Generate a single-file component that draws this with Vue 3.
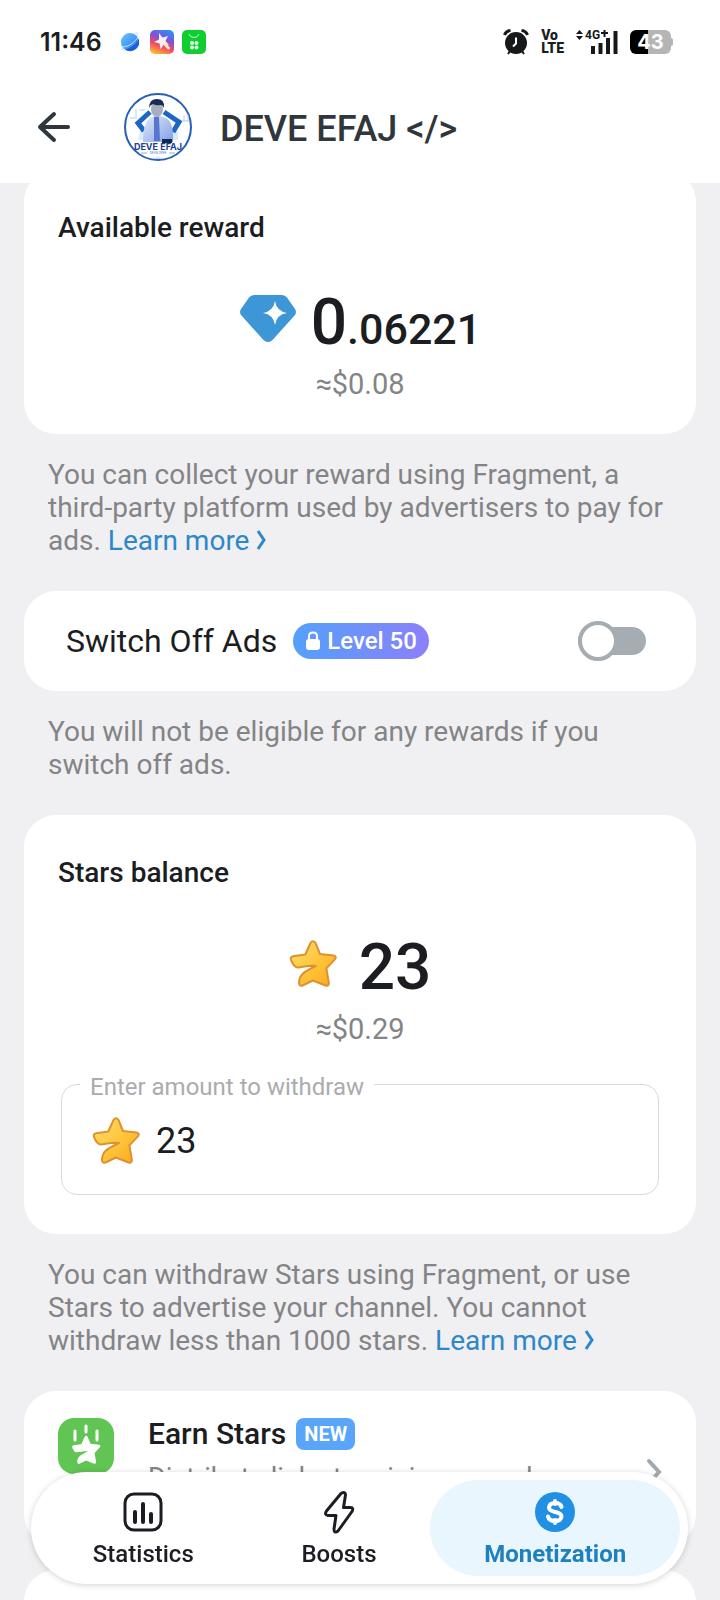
<script setup>
import { ref } from "vue";

const adsOff = ref(false);
const amount = ref("23");
const activeTab = ref("monetization");

const tabs = [
	{ id: "statistics", label: "Statistics" },
	{ id: "boosts", label: "Boosts" },
	{ id: "monetization", label: "Monetization" }
];

const starPath = "M21.500 3q2.500-3.600 5 0l4.500 11 13.500 1.500q3.600.9 1.400 3.900l-8.500 9 2.400 14.200q.3 4-3.200 2.900L24 40.500l-10.500 5q-3.700 1-3.500-2.800c.2-3.400.8-6.300 3.500-8.800 3.200-3 8-5.200 13.500-8-6-.8-12 .8-17.500 1.500-3 .2-4-1-5.400-3.200l-2-4q-1.200-3.400 2-4l12.200-1.700z";
</script>

<template>
	<div class="page">
		<svg class="defs" width="0" height="0" aria-hidden="true">
			<defs>
				<linearGradient id="gold" x1="0" y1="0" x2="1" y2="1">
					<stop offset="0" stop-color="#ffe06a" />
					<stop offset="0.6" stop-color="#fdc136" />
					<stop offset="1" stop-color="#fba71f" />
				</linearGradient>
				<linearGradient id="rainbow" x1="0.7" y1="0" x2="0.3" y2="1">
					<stop offset="0" stop-color="#2f8cf5" />
					<stop offset="0.35" stop-color="#7a55d8" />
					<stop offset="0.65" stop-color="#f0476b" />
					<stop offset="1" stop-color="#ffb52e" />
				</linearGradient>
				<linearGradient id="orb" x1="0" y1="0" x2="1" y2="1">
					<stop offset="0" stop-color="#6cc4ff" />
					<stop offset="1" stop-color="#2573e8" />
				</linearGradient>
				<linearGradient id="shirt" x1="0" y1="0" x2="1" y2="1">
					<stop offset="0" stop-color="#e6ecfb" />
					<stop offset="1" stop-color="#7f9fe4" />
				</linearGradient>
			</defs>
		</svg>

		<header class="header">
			<div class="status">
				<span class="clock">11:46</span>
				<div class="apps">
					<svg width="24" height="24" viewBox="0 0 24 24">
						<path d="M3 20Q2 2 13 3l7-1q1 5 0 10-1 9-11 9z" fill="#dceeff" />
						<circle cx="12" cy="12" r="9" fill="url(#orb)" />
						<path d="M7 19.500C14 18 19 13 20.500 9q2 6-2.500 10-5 4-11 .5z" fill="#1d5edb" />
						<path d="M4 17C11 17 17 12 20 7" fill="none" stroke="#b9e2ff" stroke-width="1" />
					</svg>
					<svg width="24" height="24" viewBox="0 0 24 24">
						<rect width="24" height="24" rx="5" fill="url(#rainbow)" />
						<path d="M9 3l3.500 4.500L18 6l-2.500 5 3.500 4-5-.5-3.500 4.500-1-5.500L4 12l5-2.500z" fill="#fff" opacity="0.9" />
						<path d="M15.500 15l3 3" stroke="#ffe9b0" stroke-width="3" stroke-linecap="round" />
					</svg>
					<svg width="24" height="24" viewBox="0 0 24 24">
						<rect width="24" height="24" rx="5" fill="#0fce32" />
						<path d="M7 4q1 3.500 5 3.500T17 4" fill="none" stroke="#b6ffc0" stroke-width="1" />
						<g fill="#e3ffe7">
							<circle cx="10" cy="13" r="2" />
							<circle cx="14.500" cy="13" r="2" />
							<circle cx="10" cy="17.500" r="2" />
							<circle cx="14.500" cy="17.500" r="2" />
						</g>
					</svg>
				</div>
				<div class="signals">
					<svg width="26" height="26" viewBox="0 0 26 26">
						<circle cx="13" cy="14" r="11" fill="#161819" />
						<path d="M1.500 6q1.500-4 6-4.500M24.500 6q-1.500-4-6-4.500" fill="none" stroke="#161819" stroke-width="3" />
						<path d="M7 22l-2 3M19 22l2 3" stroke="#161819" stroke-width="2" />
						<path d="M13 8.500v6l-3 3" fill="none" stroke="#fff" stroke-width="2" />
					</svg>
					<span class="volte"><span>Vo</span><span>LTE</span></span>
					<svg class="network" width="42" height="26" viewBox="0 0 42 26">
						<path d="M0 5h7L3.500 1zM0 7h7l-3.500 4z" fill="#161819" />
						<text x="9" y="10" class="net">4G</text>
						<path d="M25 4h7M28.500 1v7" stroke="#161819" stroke-width="2" />
						<path d="M17 17v8M24.500 14v11M32 9v16M39.500 2v23" stroke="#161819" stroke-width="4" />
					</svg>
					<span class="battery"><span class="level">43</span></span>
				</div>
			</div>
			<div class="bar">
				<button class="back" type="button" aria-label="Back">
					<svg width="36" height="32" viewBox="0 0 36 32">
						<path d="M32 16H4M18 3L4 16l14 13" fill="none" stroke="#30373c" stroke-width="4" stroke-linecap="round" stroke-linejoin="round" />
					</svg>
				</button>
				<svg class="avatar" width="68" height="68" viewBox="0 0 68 68">
					<circle cx="34" cy="34" r="33" fill="#fff" stroke="#2760b4" stroke-width="2" />
					<path d="M16 38q4-5 8-4h22q7 2 8 5v8H14z" fill="#d9ebfb" />
					<path d="M26 19l-12 11 6 8M40 19l15 10-6 10" fill="none" stroke="#1e66c4" stroke-width="5" />
					<path d="M19 49q0-19 7-24l7-3 9 3q8 4 7 24z" fill="url(#shirt)" />
					<path d="M30 24h5l1 24h-6z" fill="#5676cf" />
					<path d="M38 46h10v4H38z" fill="#16254e" />
					<ellipse cx="33" cy="16" rx="6" ry="8" fill="#a6aec0" />
					<path d="M25 15q0-9 8-9t7 9q-1-3-3-3-5 1-8-1-3 1-4 4z" fill="#192d52" />
					<path d="M12 16v8M6 25h7M60 22v6M64 22v6M58 28h7M15 17h6" fill="none" stroke="#b5cfe8" stroke-width="1" />
					<text x="34" y="57" class="avatar-name">DEVE EFAJ</text>
					<path d="M17 60h6M45 60h6" stroke="#8fb0dc" stroke-width="1" />
					<text x="34" y="61" class="avatar-sub">DEVELOPER</text>
					<text x="34" y="66" class="avatar-sub">&lt;/&gt;</text>
				</svg>
				<h1 class="title">DEVE EFAJ &lt;/&gt;</h1>
			</div>
		</header>

		<main class="content">
			<section class="card">
				<h2 class="card-title">Available reward</h2>
				<div class="amount gem">
					<svg width="58" height="50" viewBox="0 0 58 50">
						<path d="M15 1h28q3 0 5 2.500L56 15q2 3 0 6L34 45.500q-5 5-10 0L2 21q-2-3 0-6l8-11.500Q12 1 15 1z" fill="#3d96d5" />
						<path d="M36 7q1.500 10 12 12-10.500 1.500-12 12-1.500-10.500-12-12 10.500-2 12-12z" fill="#fff" />
					</svg>
					<span class="sum">0<span class="fraction">.06221</span></span>
				</div>
				<p class="approx">≈$0.08</p>
			</section>
			<p class="note">
				You can collect your reward using Fragment, a third-party platform used by advertisers to pay for ads.
				<a href="#reward" class="more">Learn more<svg width="12" height="22" viewBox="0 0 12 22"><path d="M3 2l6 9-6 9" /></svg></a>
			</p>

			<section class="card switch-card">
				<label for="ads-off" class="switch-label">Switch Off Ads</label>
				<span class="level-badge">
					<svg width="16" height="20" viewBox="0 0 16 20">
						<rect x="1" y="8" width="14" height="11" rx="3" fill="#fff" />
						<path d="M4 9V5q0-3.500 4-3.500T12 5v4" fill="none" stroke="#fff" stroke-width="2" />
					</svg>
					Level 50
				</span>
				<input id="ads-off" v-model="adsOff" class="toggle" type="checkbox" />
			</section>
			<p class="note">You will not be eligible for any rewards if you switch off ads.</p>

			<section class="card">
				<h2 class="card-title">Stars balance</h2>
				<div class="amount stars">
					<svg class="star" width="48" height="48" viewBox="0 0 48 48"><path :d="starPath" /></svg>
					<span class="sum">23</span>
				</div>
				<p class="approx">≈$0.29</p>
				<fieldset class="field">
					<legend><label for="amount">Enter amount to withdraw</label></legend>
					<div class="field-row">
						<svg class="star" width="48" height="48" viewBox="0 0 48 48"><path :d="starPath" /></svg>
						<input id="amount" v-model="amount" type="text" inputmode="numeric" />
					</div>
				</fieldset>
			</section>
			<p class="note">
				You can withdraw Stars using Fragment, or use Stars to advertise your channel. You cannot withdraw less than 1000 stars.
				<a href="#stars" class="more">Learn more<svg width="12" height="22" viewBox="0 0 12 22"><path d="M3 2l6 9-6 9" /></svg></a>
			</p>

			<a href="#earn" class="card earn">
				<svg width="56" height="56" viewBox="0 0 56 56">
					<rect width="56" height="56" rx="16" fill="#61c554" />
					<path d="M17 13v9M28 8v6M39 13v9" stroke="#fff" stroke-width="3" stroke-linecap="round" />
					<path :d="starPath" class="earn-star" transform="translate(13 17) scale(0.63)" />
				</svg>
				<span class="earn-text">
					<span class="earn-title">Earn Stars <span class="new">NEW</span></span>
					<span class="earn-desc">Distribute links to mini apps and earn a share of their revenue in Stars.</span>
				</span>
				<svg class="chevron" width="16" height="28" viewBox="0 0 16 28">
					<path d="M3 3l10 11L3 25" />
				</svg>
			</a>
			<section class="card next"></section>
		</main>

		<nav class="tabs">
			<button
				v-for="tab in tabs"
				:key="tab.id"
				type="button"
				class="tab"
				:class="{ active: activeTab === tab.id }"
				@click="activeTab = tab.id"
			>
				<svg v-if="tab.id === 'statistics'" width="44" height="44" viewBox="0 0 44 44">
					<rect x="4" y="4" width="36" height="36" rx="9" />
					<path class="bars" d="M14 22v10M22 14v18M30 24v8" />
				</svg>
				<svg v-else-if="tab.id === 'boosts'" width="44" height="44" viewBox="0 0 44 44">
					<path d="M24 3.500L9.500 21q-2.500 4 1.500 4.500h8L17 39q0 5 4 2l14-19.500q2-4-1.500-4h-7L28.500 5q0-4-4.500-1.500z" />
				</svg>
				<svg v-else class="coin" width="44" height="44" viewBox="0 0 44 44">
					<circle cx="22" cy="22" r="20" />
					<path d="M28.500 17q-1-4-6.500-4t-6 4.500c0 6 12.500 3 12.500 9Q28 31 22 31t-7-4.500M22 11v3M22 30v3" />
				</svg>
				<span>{{ tab.label }}</span>
			</button>
		</nav>
	</div>
</template>

<style>
body {
	background: #f0f0f2;
}
</style>

<style scoped>
.page {
	height: 100vh;
	overflow: hidden auto;
	scrollbar-width: none;
	font-family: Roboto, "Noto Sans", sans-serif;
	color: #1b1d22;
	background: #f0f0f2;
}

.defs {
	position: absolute;
}

svg {
	display: block;
	flex: none;
}

h1,
h2,
p {
	margin: 0;
	font-weight: 500;
}

button,
input {
	font: inherit;
	color: inherit;
	padding: 0;
	border: none;
	background: none;
}

.header {
	background: #fff;
}

.status {
	display: flex;
	align-items: center;
	padding: 24px 49px 0 40px;
	height: 36px;
}

.clock {
	font-family: Inter, sans-serif;
	font-size: 25px;
	line-height: 32px;
	font-weight: 600;
}

.apps {
	display: flex;
	gap: 8px;
	margin-left: 16px;
}

.signals {
	display: flex;
	align-items: center;
	gap: 12px;
	margin-left: auto;
}

.volte {
	display: flex;
	flex-direction: column;
	font-size: 14px;
	line-height: 13px;
	font-weight: 900;
}

.network {
	overflow: visible;
}

.net {
	font: 700 12px Roboto, sans-serif;
	fill: #161819;
}

.battery {
	position: relative;
	display: flex;
	justify-content: center;
	width: 41px;
	height: 24px;
	border-radius: 6px;
	background: linear-gradient(90deg, #000 45%, #b5b5b5 45%);
}

.battery::after {
	content: "";
	position: absolute;
	top: 8px;
	right: -2px;
	width: 2px;
	height: 8px;
	border-radius: 0 2px 2px 0;
	background: #b5b5b5;
}

.level {
	font-family: Inter, sans-serif;
	font-size: 20px;
	line-height: 24px;
	font-weight: 700;
	color: #fff;
}

.bar {
	display: flex;
	align-items: center;
	height: 68px;
	padding: 33px 36px 22px;
}

.back {
	cursor: pointer;
}

.avatar {
	margin-left: 52px;
}

.avatar-name {
	font: 700 9px Inter, sans-serif;
	fill: #1b3f92;
	text-anchor: middle;
}

.avatar-sub {
	font: 400 3px Roboto, sans-serif;
	fill: #4a86cc;
	text-anchor: middle;
}

.title {
	margin-left: 28px;
	padding-top: 3px;
	font-size: 36px;
	line-height: 44px;
	color: #30373c;
}

.content {
	padding: 0 24px 120px;
	margin-top: -13px;
}

.card {
	display: block;
	padding: 42px 34px 34px;
	border-radius: 32px;
	background: #fff;
}

.card-title {
	font-size: 28px;
	line-height: 32px;
}

.amount {
	display: flex;
	align-items: center;
	justify-content: center;
	gap: 14px;
	margin-top: 47px;
}

.amount svg {
	margin-bottom: 8px;
}

.amount.stars {
	gap: 22px;
}

.sum {
	font-size: 64px;
	line-height: 64px;
	font-weight: 500;
}

.fraction {
	font-size: 43px;
	line-height: 40px;
}

.approx {
	margin-top: 13px;
	font-size: 29px;
	line-height: 32px;
	font-weight: 400;
	color: #838485;
	text-align: center;
}

.note {
	padding: 24px 24px 34px;
	font-size: 28px;
	line-height: 33px;
	font-weight: 400;
	color: #838485;
}

.more {
	color: #2d87c8;
	text-decoration: none;
	white-space: nowrap;
}

.more svg {
	display: inline-block;
	margin-left: 6px;
	vertical-align: -1px;
	fill: none;
	stroke: #2d87c8;
	stroke-width: 3;
}

.switch-card {
	display: flex;
	align-items: center;
	padding: 30px 50px 30px 42px;
}

.switch-label {
	font-size: 32px;
	line-height: 40px;
}

.level-badge {
	display: flex;
	align-items: center;
	gap: 6px;
	margin-left: 16px;
	padding: 0 12px;
	border-radius: 18px;
	background: linear-gradient(90deg, #55a0fb, #8b80f9);
	font-size: 24px;
	line-height: 36px;
	font-weight: 500;
	color: #fff;
}

.toggle {
	appearance: none;
	display: flex;
	align-items: center;
	width: 68px;
	height: 28px;
	margin: 0 0 0 auto;
	border-radius: 14px;
	background: #a5acb2;
	cursor: pointer;
}

.toggle::before {
	content: "";
	box-sizing: border-box;
	width: 40px;
	height: 40px;
	border: 4px solid #a5acb2;
	border-radius: 50%;
	background: #fff;
}

.toggle:checked {
	justify-content: flex-end;
	background: #3d96d5;
}

.star {
	fill: url(#gold);
	stroke: #df9030;
	stroke-width: 2;
	stroke-linejoin: round;
}

.field {
	min-width: 0;
	margin: 22px 3px 5px;
	padding: 0 30px 29px;
	border: 1px solid #d9dadb;
	border-radius: 16px;
}

.field legend {
	margin-left: -12px;
	padding: 6px 10px 0;
	font-size: 24px;
	line-height: 28px;
	color: #abacae;
}

.field-row {
	display: flex;
	align-items: center;
	gap: 16px;
	padding-top: 16px;
}

.field-row input {
	flex: 1;
	min-width: 0;
	height: 48px;
	font-size: 36px;
	outline: none;
}

.earn {
	display: flex;
	padding: 27px 34px 20px;
	text-decoration: none;
	color: inherit;
}

.earn-star {
	fill: #fff;
}

.earn-text {
	flex: 1;
	margin-left: 34px;
}

.earn-title {
	display: flex;
	align-items: center;
	gap: 10px;
	font-size: 30px;
	line-height: 28px;
	font-weight: 500;
}

.new {
	padding: 0 8px;
	border-radius: 8px;
	background: #58a5fa;
	font-size: 20px;
	line-height: 32px;
	font-weight: 700;
	color: #fff;
}

.earn-desc {
	display: block;
	margin-top: 12px;
	font-size: 27px;
	line-height: 32px;
	color: #838485;
}

.chevron {
	align-self: center;
	fill: none;
	stroke: #a1a8ae;
	stroke-width: 4;
	stroke-linecap: round;
}

.next {
	margin-top: 24px;
	min-height: 160px;
}

.tabs {
	position: fixed;
	left: 31px;
	right: 32px;
	bottom: 16px;
	display: flex;
	padding: 8px;
	border-radius: 56px;
	background: #fff;
	box-shadow: 0 1px 6px rgba(0, 0, 0, 0.18);
}

.tab {
	display: flex;
	flex: 1 1 auto;
	flex-direction: column;
	align-items: center;
	gap: 6px;
	height: 96px;
	padding: 10px 20px 8px;
	box-sizing: border-box;
	border-radius: 48px;
	font-size: 24px;
	line-height: 28px;
	font-weight: 500;
	cursor: pointer;
}

.tab svg {
	fill: none;
	stroke: #1b1d22;
	stroke-width: 3;
	stroke-linecap: round;
	stroke-linejoin: round;
}

.tab .bars {
	stroke-width: 4;
}

.tab.active {
	background: #eaf6fd;
	color: #1f80bf;
	font-weight: 700;
}

.tab .coin circle {
	fill: #2090e5;
	stroke: none;
}

.tab .coin path {
	stroke: #fff;
	stroke-width: 4;
}
</style>
